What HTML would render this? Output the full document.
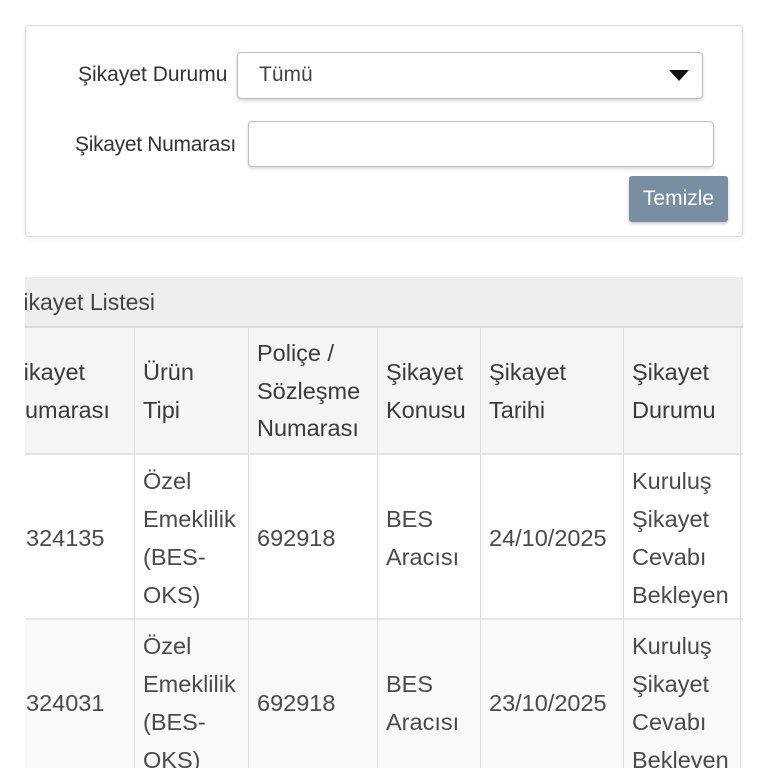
<!DOCTYPE html>
<html><head><meta charset="utf-8"><style>
*{margin:0;padding:0;box-sizing:border-box}
body{width:768px;height:768px;overflow:hidden;background:#fff;font-family:"Liberation Sans",sans-serif;color:#333;position:relative}
.a{position:absolute}
.card{left:25px;top:25px;width:718px;height:212px;border:1px solid #ddd;border-radius:4px;box-shadow:0 2px 6px rgba(0,0,0,.06)}
.lbl{font-size:21px;color:#333}
.box{border:1px solid #bbb;border-radius:4px;background:#fff;box-shadow:0 2px 3px rgba(0,0,0,.15)}
.btn{left:629px;top:176px;width:99px;height:46px;background:#7a8ea3;border-radius:3px;color:#fff;font-size:21px;text-align:center;line-height:46px;box-shadow:0 2px 3px rgba(0,0,0,.2)}
.clip{left:25px;top:277px;width:718px;height:491px;overflow:hidden}
.cell{position:absolute;display:flex;align-items:center;font-size:23.5px;line-height:38px;padding-left:8px;border-left:1px solid #ddd;white-space:nowrap}
.h{color:#3a3a3a;line-height:37.5px}
.b{color:#4a4a4a}
</style></head><body>
<div class="a card"></div>
<div class="a lbl" style="left:78px;top:63px">Şikayet Durumu</div>
<div class="a box" style="left:237px;top:52px;width:466px;height:47px"></div>
<div class="a" style="left:259px;top:63px;font-size:21px;color:#444">Tümü</div>
<svg class="a" style="left:669px;top:70px" width="20" height="12"><path d="M0 0H20L10 11Z" fill="#111"/></svg>
<div class="a lbl" style="left:75px;top:133px;letter-spacing:-0.3px">Şikayet Numarası</div>
<div class="a box" style="left:248px;top:121px;width:466px;height:46px"></div>
<div class="a btn">Temizle</div>

<div class="a clip">
 <div class="a" style="left:0;top:0;width:718px;height:51px;background:#eee;border-bottom:2px solid #ddd"></div>
 <div class="a" style="left:-17px;top:12px;font-size:23px;color:#444">Şikayet Listesi</div>
 <div class="a" style="left:0;top:51px;width:718px;height:127px;background:#f5f5f5;border-bottom:2px solid #e4e4e4"></div>
 <div class="a" style="left:0;top:178px;width:718px;height:165px;background:#fff;border-bottom:2px solid #e6e6e6"></div>
 <div class="a" style="left:0;top:343px;width:718px;height:160px;background:#f9f9f9"></div>

 <div class="cell h" style="left:-25px;top:51px;width:134px;height:127px;border:none">Şikayet<br>Numarası</div>
 <div class="cell h" style="left:109px;top:51px;width:114px;height:127px">Ürün<br>Tipi</div>
 <div class="cell h" style="left:223px;top:51px;width:129px;height:127px">Poliçe /<br>Sözleşme<br>Numarası</div>
 <div class="cell h" style="left:352px;top:51px;width:103px;height:127px">Şikayet<br>Konusu</div>
 <div class="cell h" style="left:455px;top:51px;width:143px;height:127px">Şikayet<br>Tarihi</div>
 <div class="cell h" style="left:598px;top:51px;width:118px;height:127px;border-right:1px solid #ddd">Şikayet<br>Durumu</div>

 <div class="cell b" style="left:-7px;top:178px;width:116px;height:165px;border:none">324135</div>
 <div class="cell b" style="left:109px;top:178px;width:114px;height:165px">Özel<br>Emeklilik<br>(BES-<br>OKS)</div>
 <div class="cell b" style="left:223px;top:178px;width:129px;height:165px">692918</div>
 <div class="cell b" style="left:352px;top:178px;width:103px;height:165px">BES<br>Aracısı</div>
 <div class="cell b" style="left:455px;top:178px;width:143px;height:165px">24/10/2025</div>
 <div class="cell b" style="left:598px;top:178px;width:118px;height:165px;border-right:1px solid #ddd">Kuruluş<br>Şikayet<br>Cevabı<br>Bekleyen</div>

 <div class="cell b" style="left:-7px;top:343px;width:116px;height:165px;border:none">324031</div>
 <div class="cell b" style="left:109px;top:343px;width:114px;height:165px">Özel<br>Emeklilik<br>(BES-<br>OKS)</div>
 <div class="cell b" style="left:223px;top:343px;width:129px;height:165px">692918</div>
 <div class="cell b" style="left:352px;top:343px;width:103px;height:165px">BES<br>Aracısı</div>
 <div class="cell b" style="left:455px;top:343px;width:143px;height:165px">23/10/2025</div>
 <div class="cell b" style="left:598px;top:343px;width:118px;height:165px;border-right:1px solid #ddd">Kuruluş<br>Şikayet<br>Cevabı<br>Bekleyen</div>
</div>
</body></html>
